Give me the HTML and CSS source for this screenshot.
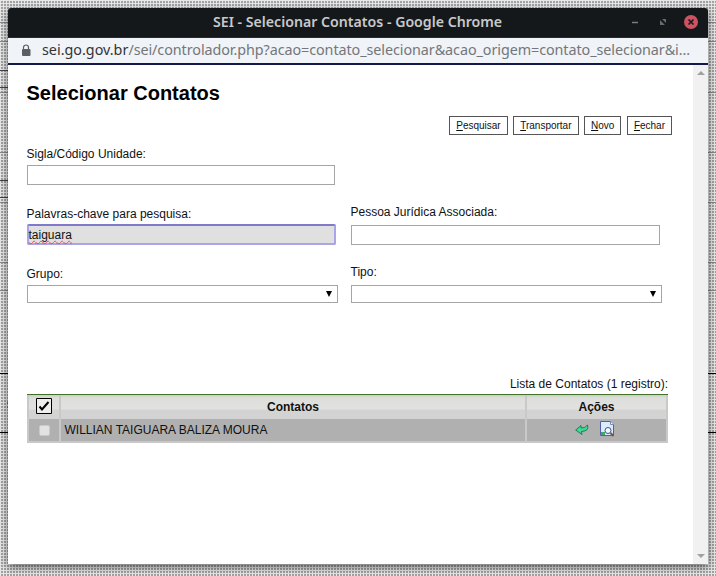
FILE: index.html
```html
<!DOCTYPE html>
<html lang="pt-BR">
<head>
<meta charset="utf-8">
<title>SEI - Selecionar Contatos</title>
<link rel="stylesheet" href="styles.css">
</head>
<body>
<svg class="backdrop" width="716" height="576" aria-hidden="true">
  <path class="line-soft" d="M0 22.500H716M0 41.500H716M0 92.500H716M0 152.500H716M0 202.500H716M0 262.500H716M0 290.500H716"/>
  <path class="line-mid" d="M0 70.500H8M0 87.500H8M0 180.500H8M0 197.500H8"/>
  <path class="line-hard" d="M0 373.500H716M0 432.500H716"/>
  <path d="M7 402h1v2h-1zM7 406h1v2h-1z" fill="#8a7438"/>
</svg>
<div class="window">
  <header class="titlebar">
    <span class="window-title">SEI - Selecionar Contatos - Google Chrome</span>
    <svg class="controls" width="76" height="20" viewBox="0 0 76 20">
      <path d="M8 11.500h6" stroke="#777b80" stroke-width="1.500"/>
      <path d="M36 9v5h5zM38 8h4v4z" fill="#66696d"/>
      <circle cx="67" cy="11" r="7" fill="#cd5362"/>
      <path d="M64.500 8.500l5 5m0-5l-5 5" stroke="#181a1e" stroke-width="1.700"/>
    </svg>
  </header>
  <div class="addressbar">
    <svg class="lock" width="10" height="13" viewBox="0 0 10 13"><path d="M2.500 6V3.500a2.500 2.500 0 0 1 5 0V6" fill="none" stroke="#5b5e62" stroke-width="1.200"/><rect x="1" y="5" width="8.500" height="7" rx="1" fill="#5b5e62"/></svg>
    <span class="url"><b>sei.go.gov.br</b>/sei/controlador.php?acao=contato_selecionar&amp;acao_origem=contato_selecionar&amp;i...</span>
  </div>
  <div class="viewport">
    <main class="page">
      <h1>Selecionar Contatos</h1>
      <div class="commands">
        <button><u>P</u>esquisar</button><button><u>T</u>ransportar</button><button><u>N</u>ovo</button><button><u>F</u>echar</button>
      </div>
      <div class="field sigla"><label>Sigla/Código Unidade:</label><div class="input"></div></div>
      <div class="filters">
        <div class="column left">
          <div class="field keywords"><label>Palavras-chave para pesquisa:</label><div class="input focused"><span>taiguara</span></div></div>
          <div class="field"><label>Grupo:</label><div class="select"><i></i></div></div>
        </div>
        <div class="column right">
          <div class="field"><label>Pessoa Jurídica Associada:</label><div class="input"></div></div>
          <div class="field"><label>Tipo:</label><div class="select"><i></i></div></div>
        </div>
      </div>
      <p class="caption">Lista de Contatos (1 registro):</p>
      <div class="grid">
        <div class="row head">
          <div class="cell"><svg width="16" height="16" viewBox="0 0 16 16"><path d="M.5.5h15v15H.5z" fill="#eee" stroke="#000"/><path d="M3.500 8.500L6 11.500L12.500 4" fill="none" stroke="#000" stroke-width="2"/></svg></div>
          <div class="cell">Contatos</div>
          <div class="cell">Ações</div>
        </div>
        <div class="row body">
          <div class="cell"><span class="check"></span></div>
          <div class="cell name">WILLIAN TAIGUARA BALIZA MOURA</div>
          <div class="cell actions">
            <svg width="14" height="14" viewBox="0 0 14 14"><path d="M.7 8L6 3.500V6Q10 6.500 12.500 3Q14.500 9 6.500 9.500L7 12.500Z" fill="#3bdc92" stroke="#19644c" stroke-width=".8"/></svg>
            <svg width="16" height="16" viewBox="0 0 16 16"><path d="M1.500.5h10l3 3v11h-13z" fill="#d8ecfb" stroke="#5260a5"/><path d="M11.500.5v3h3" fill="#fff" stroke="#7887bd"/><path d="M2 11h4v3H2z" fill="#43a56d"/><circle cx="9" cy="9.500" r="3" fill="#f4f9ff" stroke="#42508d"/><path d="M11.500 12l3 3" stroke="#765447" stroke-width="2"/></svg>
          </div>
        </div>
      </div>
    </main>
    <div class="scrollbar"><i class="up"></i><i class="down"></i></div>
  </div>
</div>
</body>
</html>
```
FILE: styles.css
```css
* { box-sizing: border-box; }
body {
  margin: 0; padding: 8px; width: 716px; height: 576px; overflow: hidden;
  font: 12px/14px "Liberation Sans", Arial, sans-serif; color: #111;
  background:
    linear-gradient(#e8e8e8 1px, transparent 1px) 0 0 / 3px 3px,
    linear-gradient(90deg, #e8e8e8 1px, #a2a2a2 1px) 0 0 / 3px 3px;
}
.backdrop { position: absolute; left: 0; top: 0; }
.line-soft { stroke: #888; }
.line-mid { stroke: #444; }
.line-hard { stroke: #000; }
.window {
  position: relative; width: 700px; height: 556px; background: #fff;
  display: flex; flex-direction: column; border-radius: 3px 3px 0 0;
  box-shadow: 0 3px 9px rgba(0,0,0,.55);
}
.titlebar {
  height: 29px; flex: none; background: #15181b; border-radius: 3px 3px 0 0;
  display: flex; align-items: center; justify-content: flex-end; padding: 0 8px 3px 205px;
}
.window-title { flex: 1; font: 600 14.15px/20px "Noto Sans", sans-serif; color: #c8c9ca; white-space: nowrap; padding-top: 1px; }
.controls { flex: none; }
.addressbar {
  height: 28px; flex: none; background: #f0f3f7; border-top: 1px solid #202657; border-bottom: 2px solid #14184a;
  display: flex; align-items: center; padding: 0 0 1px 13px; gap: 11px;
}
.lock { flex: none; }
.url { font: 14.35px/22px "Noto Sans", sans-serif; letter-spacing: -.068px; color: #73777b; white-space: nowrap; }
.url b { font-weight: 400; letter-spacing: 0; color: #303438; }
.viewport { flex: 1; display: flex; }
.page { width: 685px; padding: 17px 25px 0 19px; }
h1 { margin: 0 0 0 -.5px; font-size: 20px; line-height: 22px; color: #000; }
.commands { display: flex; justify-content: flex-end; gap: 5.5px; margin: 12px -4px 0 0; }
button {
  height: 19px; padding: 0 6px; border: 1px solid #555; background: #fff;
  font: 10px/15px "Liberation Sans", Arial, sans-serif; color: #111;
}
.field label { display: block; height: 18px; margin-left: -.5px; }
.sigla { margin-top: 12px; }
.input { width: 308px; height: 20px; border: 1px solid #a5a5a5; background: #fff; }
.filters { display: flex; margin-top: 20px; height: 98px; gap: 15px; }
.column { width: 309px; }
.column .field { height: 60px; }
.left .field { padding-top: 2px; }
.right label { height: 20px; }
.right .input { width: 309px; }
.input.focused { width: 309px; height: 21px; margin-top: -1px; border: 2px solid #a9a5e8; border-top-color: #817acb; border-radius: 2px; background: #e0e0e0; line-height: 19px; }
.focused span { margin-left: -.5px; text-decoration: underline wavy #e34c57 1px; text-underline-offset: 1px; text-decoration-skip-ink: none; }
.select { width: 311px; height: 18px; border: 1px solid #a5a5a5; display: flex; justify-content: flex-end; padding: 5px 5px 0 0; }
.select i { width: 0; height: 0; border: 3.5px solid transparent; border-top: 6px solid #000; border-bottom: 0; }
.caption { margin: 74px 0 3px; text-align: right; }
.grid { width: 641px; border-top: 1px solid #456f2c; }
.row { display: grid; grid-template-columns: 32px 466px 143px; }
.cell { display: flex; align-items: center; justify-content: center; border: solid #c9c9c9; border-width: 0 0 0 2px; }
.cell:last-child { border-right-width: 2px; }
.head { height: 24px; background: linear-gradient(#c2d5b8 0, #dededc 3px, #e1e1df 60%, #d3d3d3 61%); font-weight: 700; }
.head .cell { padding-bottom: 1px; }
.head .cell:first-child { padding-bottom: 2px; }
.head .cell:nth-child(2), .head .cell:last-child { padding-bottom: 0; }
.body { height: 24px; background: #b0b0b0; border-bottom: 2px solid #c8c8c8; }
.body .name { justify-content: flex-start; padding-left: 3.5px; }
.actions { gap: 10px; padding: 0 3px 2px 0; }
.check { width: 11px; height: 11px; border-radius: 2px; background: #e2e2e2; border: 1px solid #c9c9c9; }
.scrollbar { width: 15px; background: #f1f1f1; display: flex; flex-direction: column; justify-content: space-between; align-items: center; padding: 6px 0; }
.scrollbar i { border: 4px solid transparent; width: 0; height: 0; }
.up { border-top: 0 !important; border-bottom-color: #a0a0a0 !important; }
.down { border-bottom: 0 !important; border-top-color: #a0a0a0 !important; }
```
